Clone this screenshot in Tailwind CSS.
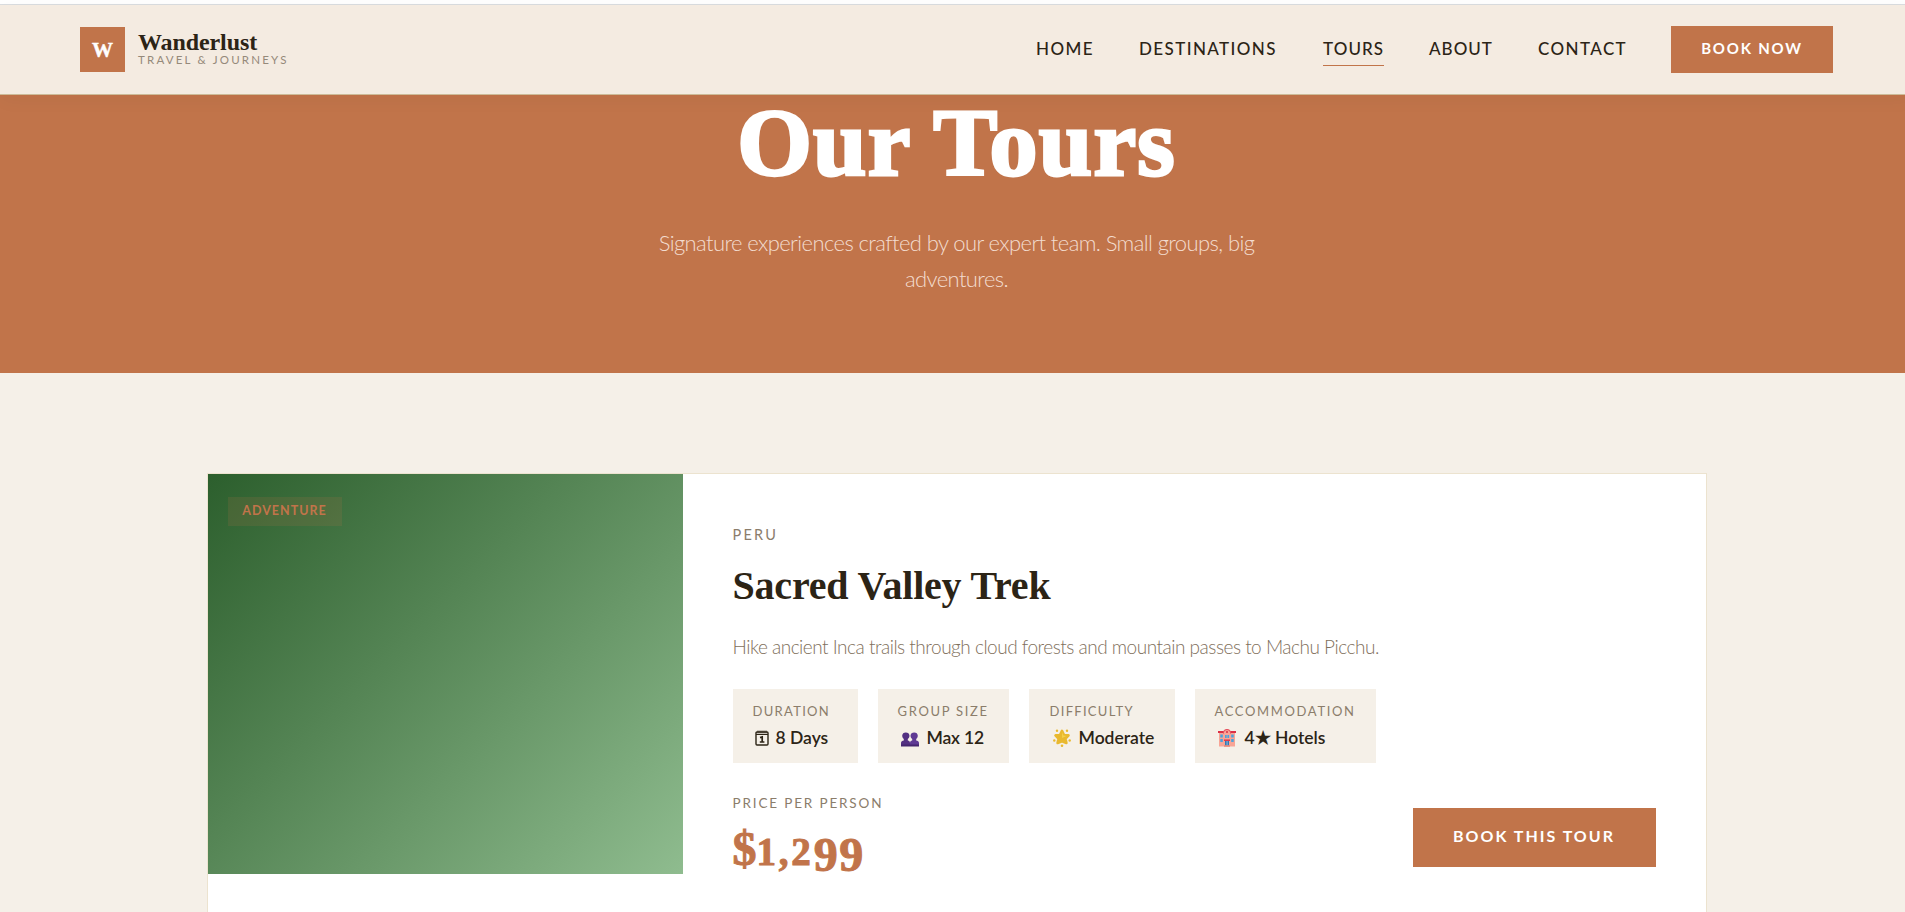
<!DOCTYPE html>
<html lang="en">
<head>
    <meta charset="UTF-8">
    <meta name="viewport" content="width=device-width, initial-scale=1.0">
    <title>Wanderlust - Our Tours</title>
    <script src="https://cdn.jsdelivr.net/npm/@tailwindcss/browser@4"></script>
</head>
<body class="bg-[#f5f0e8] font-[Lato,sans-serif] overflow-hidden">
    <div class="w-[1913px] h-[912px] overflow-hidden">
        <!-- Header -->
        <div class="h-[5px] bg-white border-b border-[#dadde0]"></div>
        <header class="relative z-10 h-[90px] px-20 flex items-center justify-between bg-[#f4ebe1] border-b border-[#cdbb98] shadow-[0_4px_20px_rgba(44,36,22,0.04)]">
            <div class="flex items-center gap-3">
                <div class="w-[45px] h-[45px] bg-[#c1744a] flex items-center justify-center">
                    <span class="pt-0.5 font-['Liberation_Serif',serif] font-bold text-[21px] text-white [-webkit-text-stroke:0.4px_white]">W</span>
                </div>
                <div class="flex flex-col -mt-[3px] pl-px">
                    <span class="font-['Liberation_Serif',serif] font-bold text-2xl leading-6 tracking-[-0.1px] text-[#2c2416]">Wanderlust</span>
                    <span class="text-[11.5px] leading-3 tracking-[2.2px] text-[#95897a]">TRAVEL &amp; JOURNEYS</span>
                </div>
            </div>
            <nav class="flex items-center gap-[45px] text-[17px] leading-6 tracking-[1.4px] font-medium text-[#2c2416] whitespace-nowrap">
                <a href="#" class="w-[58px] pb-px">HOME</a>
                <a href="#" class="w-[139px] pb-px">DESTINATIONS</a>
                <a href="#" class="w-[61px] py-1 border-b border-[#c1744a] tracking-[1.1px]">TOURS</a>
                <a href="#" class="w-[64px] pb-px tracking-[1px]">ABOUT</a>
                <a href="#" class="w-[88px] pb-px">CONTACT</a>
                <button class="w-[162px] h-[47px] pb-[3px] bg-[#c1744a] text-white text-[15px] font-bold tracking-[1.8px]">BOOK NOW</button>
            </nav>
        </header>

        <!-- Hero -->
        <section class="h-[278px] bg-[#c1744a] flex flex-col items-center text-center">
            <h1 class="font-['Liberation_Serif',serif] font-bold text-[96px] leading-[96px] tracking-[1.2px] text-white [-webkit-text-stroke:3px_white]">Our Tours</h1>
            <p class="mt-[34px] w-[620px] text-[22px] leading-9 font-light tracking-[-0.6px] text-[#f3dccf]">Signature experiences crafted by our expert team. Small groups, big<br>adventures.</p>
        </section>

        <!-- Tours -->
        <section class="pt-[100px] flex justify-center">
            <article class="w-[1500px] h-[500px] flex items-start bg-white border border-[#ece3cf]">
                <div class="w-[475px] h-[400px] pt-[23px] pl-5 bg-linear-135 from-[#2c5f2d] to-[#8fbc8f]">
                    <span class="flex w-[114px] h-[29px] pb-px items-center justify-center bg-[#c1744a]/15 text-[#c1744a] text-[12.5px] font-bold tracking-[1px]">ADVENTURE</span>
                </div>
                <div class="flex-1 pl-[50px] pr-[50px] pt-[49px] text-[#8b7d6b]">
                    <p class="text-[14.5px] leading-6 tracking-[2.2px]">PERU</p>
                    <h2 class="mt-[14px] font-['Liberation_Serif',serif] font-bold text-[40px] leading-[50px] tracking-[-0.2px] text-[#2c2416]">Sacred Valley Trek</h2>
                    <p class="mt-5 text-[19px] leading-8 font-light tracking-[-0.49px] text-[#7f705c]">Hike ancient Inca trails through cloud forests and mountain passes to Machu Picchu.</p>

                    <div class="mt-[26px] flex gap-5 text-[13px] leading-5 tracking-[1.3px] whitespace-nowrap">
                        <div class="w-[125px] h-[74px] px-5 py-3 bg-[#f5f0e8]">
                            <p>DURATION</p>
                            <p class="mt-[7px] flex items-center text-[17.5px] leading-5 font-semibold tracking-normal text-[#2c2416]">
                                <svg class="w-[14px] h-4 ml-0.5 mr-[7px]" viewBox="0 0 14 16" fill="none" stroke="#2c2416">
                                    <rect x="1" y="2" width="12" height="13" rx="1" stroke-width="1.4"/>
                                    <path d="M1 4.5h12" stroke-width="1"/>
                                    <path d="M3 .5v3M5 .5v3M7 .5v3M9 .5v3M11 .5v3" stroke-width=".9"/>
                                    <path d="M5 7.600 7.200 6.900V12M4.800 12h4.600" stroke-width="1.700"/>
                                </svg>8 Days
                            </p>
                        </div>
                        <div class="w-[131px] h-[74px] px-5 py-3 bg-[#f5f0e8]">
                            <p class="tracking-[1.7px]">GROUP SIZE</p>
                            <p class="mt-[7px] flex items-center text-[17.5px] leading-5 font-semibold tracking-[-0.2px] text-[#2c2416]">
                                <svg class="w-[18px] h-[18px] ml-[3px] mr-2" viewBox="0 0 18 18">
                                    <path fill="#533082" d="M0 17v-3c0-1.400 1.300-2 2.800-2.400V10C1.700 9 1.200 8 1.200 6.800 1.200 4.700 2.700 3.500 4.800 3.500s3.700 1.200 3.700 3.300C8.500 8 8 9 6.800 10v1.600C8.200 12 9 12.600 9 14v3z"/>
                                    <path fill="#5f3a94" d="M9 17v-3c0-1.400.8-2 2.200-2.400V10C10 9 9.500 8 9.500 6.800c0-2.100 1.600-3.300 3.700-3.300s3.600 1.200 3.600 3.300c0 1.200-.5 2.200-1.600 3.200v1.600c1.500.4 2.800 1 2.800 2.400v3z"/>
                                    <path fill="#452670" d="M0 15.500h18V17.500H0z"/>
                                </svg>Max 12
                            </p>
                        </div>
                        <div class="w-[146px] h-[74px] px-5 py-3 bg-[#f5f0e8]">
                            <p class="pl-px">DIFFICULTY</p>
                            <p class="mt-[7px] flex items-center text-[17.5px] leading-5 font-semibold tracking-normal text-[#2c2416]">
                                <svg class="w-[18px] h-[18px] ml-1 mr-2" viewBox="0 0 18 18" fill="#e9b92f">
                                    <path d="M9 1.800 11 6 15.500 6.400 12.500 9.700 13.400 14 9 12.300 4.600 14 5.500 9.700 2.500 6.400 7 6z" stroke="#e9b92f" stroke-width="2.600" stroke-linejoin="round"/>
                                    <path fill="#f5d048" d="M9 3 10.300 6.600 13.500 7 9 9z"/>
                                    <circle cx="4" cy="1.800" r="1.200"/><circle cx="14" cy="1.800" r="1.200"/>
                                    <circle cx="1.300" cy="11.500" r="1.200"/><circle cx="16.700" cy="11.500" r="1.200"/>
                                    <circle cx="9" cy="16.700" r="1.300"/>
                                </svg>Moderate
                            </p>
                        </div>
                        <div class="w-[181px] h-[74px] px-5 py-3 bg-[#f5f0e8]">
                            <p class="tracking-[1.65px]">ACCOMMODATION</p>
                            <p class="mt-[7px] flex items-center text-[17.5px] leading-5 font-semibold tracking-normal text-[#2c2416]">
                                <svg class="w-[18px] h-[18px] ml-[3px] mr-[9px]" viewBox="0 0 18 18">
                                    <path fill="#f8a596" d="M1 4h16v13.500H1z"/>
                                    <path fill="#dc2f45" d="M0 2h6v2H0zM12 2h6v2h-6z"/>
                                    <path fill="#f8a596" d="M5.500 3.500a3.500 3.500 0 0 1 7 0V15h-7z"/>
                                    <path fill="none" stroke="#e2475a" d="M5.500 4.500V3.500a3.500 3 0 0 1 7 0v1"/>
                                    <circle cx="9" cy="3" r="1" fill="#dc2f45"/>
                                    <path fill="#4ba3dc" d="M2.300 5.500h2.500v3H2.300zM2.300 10h2.500v3H2.300zM7 6h1.700v3H7zM9.400 6h1.700v3H9.400zM13.200 5.500h2.500v3h-2.500zM13.200 10h2.500v3h-2.500z"/>
                                    <path fill="#dc2f45" d="M6 10.500h6v1.400H6z"/>
                                    <path fill="#3479b7" d="M7 12h4v4.500H7z"/>
                                    <path fill="#f4f4f4" d="M8.800 12h.5v4.500h-.5z"/>
                                    <path fill="#e68373" d="M6 16.300h6v1.400H6z"/>
                                </svg>4★ Hotels
                            </p>
                        </div>
                    </div>

                    <div class="mt-[30px] flex items-start justify-between">
                        <div>
                            <p class="text-[13.5px] leading-5 tracking-[1.85px]">PRICE PER PERSON</p>
                            <!-- old-style figures: 1 and 2 at x-height, 9s hang below the baseline -->
                            <p class="mt-3 font-['Liberation_Serif',serif] font-bold text-5xl leading-none text-[#c1744a] [-webkit-text-stroke:1px_#c1744a]">$<span class="text-[39px] tracking-[2.800px] leading-none">1,2</span><span class="align-[-6px] tracking-[1.500px]">99</span></p>
                        </div>
                        <button class="mt-[15px] w-[243px] h-[59px] pb-[3px] bg-[#c1744a] text-white text-base font-bold tracking-[2px]">BOOK THIS TOUR</button>
                    </div>
                </div>
            </article>
        </section>
    </div>
</body>
</html>
